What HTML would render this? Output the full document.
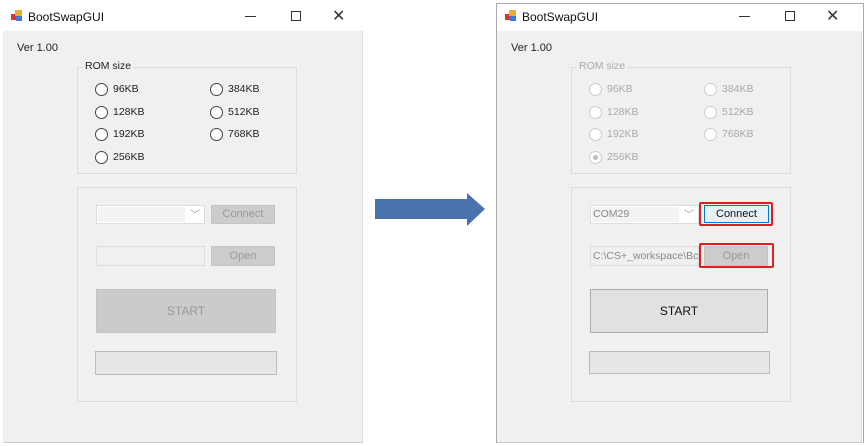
<!DOCTYPE html>
<html><head><style>
*{margin:0;padding:0;box-sizing:border-box}
body{width:864px;height:446px;background:#fff;position:relative;overflow:hidden;font-family:"Liberation Sans",sans-serif;font-size:11px;color:#222}
.a{position:absolute}
.win{position:absolute;top:0;width:368px;height:446px}
.title{position:absolute;left:28px;top:10px;font-size:12px;color:#111}
.icon{position:absolute;left:11px;top:10px;width:12px;height:11px}
.client{position:absolute;left:3px;top:31px;width:360px;height:412px;background:#f0f0f0;border-right:1px solid #ddd;border-bottom:1px solid #ccc}
.grp{position:absolute;border:1px solid #dcdcdc}
.lg{position:absolute;background:#f0f0f0;padding:0 2px;font-size:10.5px}
.rb{position:absolute;width:13px;height:13px;border-radius:50%;border:1px solid #444;background:#fff}
.rl{position:absolute;font-size:10.5px}
.dis .rb{border-color:#ccc}
.dis .rl,.dis .lg{color:#aaa}
</style></head><body>

<!-- LEFT WINDOW -->
<div class="win" style="left:0">
 <div class="icon"><div class="a" style="left:0;top:4px;width:5px;height:6px;background:#d33"></div><div class="a" style="left:4px;top:0;width:7px;height:6px;background:#e8b030"></div><div class="a" style="left:5px;top:6px;width:6px;height:5px;background:#3a7bd5"></div></div>
 <div class="title">BootSwapGUI</div>
 <div class="a" style="left:245px;top:16px;width:11px;height:1px;background:#333"></div>
 <div class="a" style="left:291px;top:11px;width:10px;height:10px;border:1px solid #333"></div>
 <div class="a" style="left:332px;top:6px;font-size:16px;color:#333">✕</div>
 <div class="client"></div>
 <div class="a" style="left:17px;top:42px;font-size:11px">Ver 1.00</div>
 <div class="grp" style="left:77px;top:67px;width:220px;height:107px"></div>
 <div class="lg" style="left:83px;top:60px">ROM size</div>
 <div class="rb" style="left:95px;top:83px"></div><div class="rl" style="left:113px;top:83px">96KB</div>
 <div class="rb" style="left:95px;top:106px"></div><div class="rl" style="left:113px;top:106px">128KB</div>
 <div class="rb" style="left:95px;top:128px"></div><div class="rl" style="left:113px;top:128px">192KB</div>
 <div class="rb" style="left:95px;top:151px"></div><div class="rl" style="left:113px;top:151px">256KB</div>
 <div class="rb" style="left:210px;top:83px"></div><div class="rl" style="left:228px;top:83px">384KB</div>
 <div class="rb" style="left:210px;top:106px"></div><div class="rl" style="left:228px;top:106px">512KB</div>
 <div class="rb" style="left:210px;top:128px"></div><div class="rl" style="left:228px;top:128px">768KB</div>
 <div class="grp" style="left:77px;top:187px;width:220px;height:215px"></div>
 <div class="a" style="left:96px;top:205px;width:109px;height:19px;border:1px solid #ddd;background:#fff"></div>
 <div class="a" style="left:98px;top:207px;width:87px;height:15px;background:#f3f3f3"></div>
 <div class="a" style="left:190px;top:206px;color:#999;font-size:10px">﹀</div>
 <div class="a" style="left:211px;top:205px;width:64px;height:19px;background:#ccc;border:1px solid #c4c4c4;color:#999;text-align:center;line-height:17px">Connect</div>
 <div class="a" style="left:96px;top:246px;width:109px;height:20px;border:1px solid #ddd;background:#f0f0f0"></div>
 <div class="a" style="left:211px;top:246px;width:64px;height:20px;background:#ccc;border:1px solid #c4c4c4;color:#999;text-align:center;line-height:18px">Open</div>
 <div class="a" style="left:96px;top:289px;width:180px;height:44px;background:#cbcbcb;border:1px solid #c4c4c4;color:#999;text-align:center;line-height:42px;font-size:12px">START</div>
 <div class="a" style="left:95px;top:351px;width:182px;height:24px;background:#e6e6e6;border:1px solid #bcbcbc"></div>
</div>

<!-- ARROW -->
<svg class="a" style="left:370px;top:188px" width="120" height="42"><polygon points="5,11 97,11 97,5 115,21 97,38 97,31 5,31" fill="#4a73ae"/></svg>

<!-- RIGHT WINDOW -->
<div class="win" style="left:494px">
 <div class="a" style="left:2px;top:3px;width:368px;height:440px;border:1px solid #aaa;border-bottom:none"></div>
 <div class="icon"><div class="a" style="left:0;top:4px;width:5px;height:6px;background:#d33"></div><div class="a" style="left:4px;top:0;width:7px;height:6px;background:#e8b030"></div><div class="a" style="left:5px;top:6px;width:6px;height:5px;background:#3a7bd5"></div></div>
 <div class="title">BootSwapGUI</div>
 <div class="a" style="left:245px;top:16px;width:11px;height:1px;background:#333"></div>
 <div class="a" style="left:291px;top:11px;width:10px;height:10px;border:1px solid #333"></div>
 <div class="a" style="left:332px;top:6px;font-size:16px;color:#333">✕</div>
 <div class="client" style="left:3px;width:365px"></div>
 <div class="a" style="left:17px;top:42px;font-size:11px">Ver 1.00</div>
 <div class="dis">
 <div class="grp" style="left:77px;top:67px;width:220px;height:107px"></div>
 <div class="lg" style="left:83px;top:60px">ROM size</div>
 <div class="rb" style="left:95px;top:83px"></div><div class="rl" style="left:113px;top:83px">96KB</div>
 <div class="rb" style="left:95px;top:106px"></div><div class="rl" style="left:113px;top:106px">128KB</div>
 <div class="rb" style="left:95px;top:128px"></div><div class="rl" style="left:113px;top:128px">192KB</div>
 <div class="rb" style="left:95px;top:151px"><div class="a" style="left:3px;top:3px;width:5px;height:5px;border-radius:50%;background:#bbb"></div></div><div class="rl" style="left:113px;top:151px">256KB</div>
 <div class="rb" style="left:210px;top:83px"></div><div class="rl" style="left:228px;top:83px">384KB</div>
 <div class="rb" style="left:210px;top:106px"></div><div class="rl" style="left:228px;top:106px">512KB</div>
 <div class="rb" style="left:210px;top:128px"></div><div class="rl" style="left:228px;top:128px">768KB</div>
 </div>
 <div class="grp" style="left:77px;top:187px;width:220px;height:215px"></div>
 <div class="a" style="left:96px;top:205px;width:109px;height:19px;border:1px solid #ddd;background:#fff"></div>
 <div class="a" style="left:98px;top:207px;width:87px;height:15px;background:#f3f3f3;color:#888;line-height:15px;padding-left:1px;font-size:10.5px">COM29</div>
 <div class="a" style="left:190px;top:206px;color:#999;font-size:10px">﹀</div>
 <div class="a" style="left:205px;top:202px;width:74px;height:24px;border:2px solid #e02020;border-radius:2px"></div>
 <div class="a" style="left:210px;top:205px;width:65px;height:18px;background:#e5f1fb;border:1px solid #0078d7;color:#111;text-align:center;line-height:16px">Connect</div>
 <div class="a" style="left:96px;top:246px;width:109px;height:20px;border:1px solid #ddd;background:#f0f0f0;color:#888;line-height:18px;padding-left:2px;white-space:nowrap;overflow:hidden;font-size:10.5px">C:\CS+_workspace\Bc</div>
 <div class="a" style="left:205px;top:243px;width:75px;height:25px;border:2px solid #e02020;border-radius:2px"></div>
 <div class="a" style="left:210px;top:246px;width:64px;height:20px;background:#ccc;border:1px solid #c4c4c4;color:#999;text-align:center;line-height:18px">Open</div>
 <div class="a" style="left:96px;top:289px;width:178px;height:44px;background:#e1e1e1;border:1px solid #adadad;color:#111;text-align:center;line-height:42px;font-size:12px">START</div>
 <div class="a" style="left:95px;top:351px;width:181px;height:23px;background:#e6e6e6;border:1px solid #bcbcbc"></div>
</div>
</body></html>
